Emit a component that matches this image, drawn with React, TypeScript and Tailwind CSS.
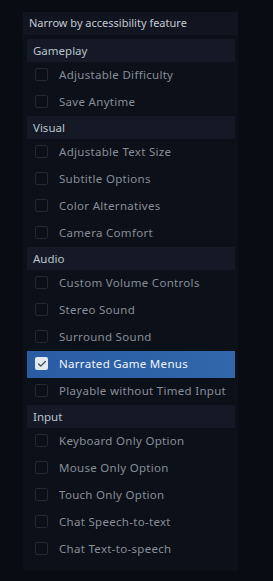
import { Check } from 'lucide-react';

const sections = [
  { title: 'Gameplay', items: ['Adjustable Difficulty', 'Save Anytime'] },
  { title: 'Visual', items: ['Adjustable Text Size', 'Subtitle Options', 'Color Alternatives', 'Camera Comfort'] },
  {
    title: 'Audio',
    items: ['Custom Volume Controls', 'Stereo Sound', 'Surround Sound', 'Narrated Game Menus', 'Playable without Timed Input'],
  },
  {
    title: 'Input',
    items: ['Keyboard Only Option', 'Mouse Only Option', 'Touch Only Option', 'Chat Speech-to-text', 'Chat Text-to-speech'],
  },
];

const checked = ['Narrated Game Menus'];

function Row({ label }: { label: string }) {
  const on = checked.includes(label);
  return (
    <div
      className={`flex h-[27px] items-center pb-[2px] pl-[8px] ${
        on ? 'bg-gradient-to-r from-[#2a5ca3] to-[#3167ab] text-[#f2f5f8]' : 'text-[#868e98]'
      }`}
    >
      <div
        className={`flex h-[13px] w-[13px] items-center justify-center rounded-[2px] ${
          on ? 'bg-[#e4e9ee]' : 'border border-[#222835] bg-[#0b0f16]'
        }`}
      >
        {on && <Check className="h-[10px] w-[10px] text-[#3b4b5e]" strokeWidth={3} />}
      </div>
      <span className="ml-[11px] tracking-[0.3px]">{label}</span>
    </div>
  );
}

export default function App() {
  return (
    <div
      className="min-h-screen bg-[#0a0c13] pt-[12px] text-[11.5px]"
      style={{ fontFamily: '"Noto Sans", "Open Sans", sans-serif' }}
    >
      <div className="ml-[23px] w-[215px] bg-[#0c1018] pb-[8px]">
        <div className="flex h-[23px] items-center bg-[#111520] pl-[6px] text-[11px] text-[#c2cad3]">
          Narrow by accessibility feature
        </div>
        <div className="mx-[4px] mt-[4px] mr-[3px]">
          {sections.map((s) => (
            <div key={s.title}>
              <div className="flex h-[23px] items-center bg-[#141925] pl-[6px] text-[#b9c3ce]">{s.title}</div>
              {s.items.map((i) => (
                <Row key={i} label={i} />
              ))}
            </div>
          ))}
        </div>
      </div>
    </div>
  );
}
